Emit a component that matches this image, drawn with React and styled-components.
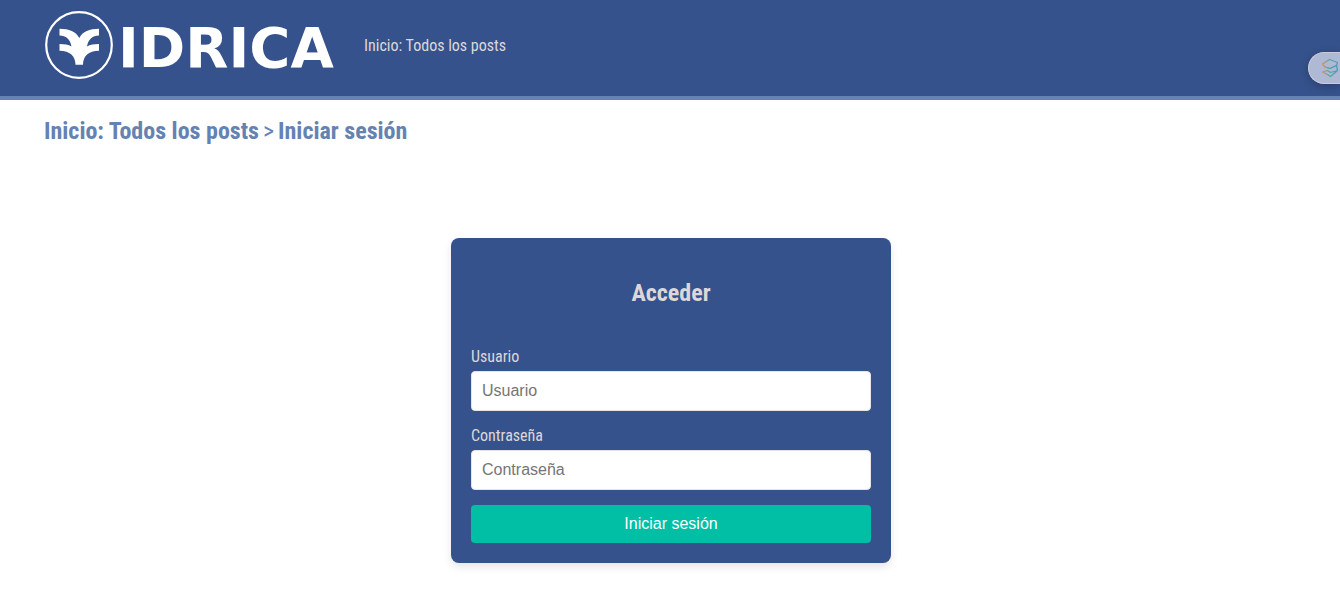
import React from "react";
import styled, { createGlobalStyle } from "styled-components";

const GlobalStyle = createGlobalStyle`
  *, *::before, *::after { box-sizing: border-box; }
  body {
    margin: 0;
    background: #fff;
    font-family: "Roboto Condensed", "Liberation Sans Narrow", Roboto, sans-serif;
    font-size: 16px;
    line-height: 19px;
  }
`;

const Header = styled.header`
  display: flex;
  align-items: center;
  gap: 20px;
  height: 100px;
  padding: 0 44px;
  background: #36528c;
  border-bottom: 4px solid #6482b2;
`;

const Brand = styled.a`
  display: flex;
  align-items: center;
  gap: 4px;
  width: 300px;
  height: 70px;
  margin-bottom: 6px;
  color: #fff;
  text-decoration: none;
`;

const Emblem = styled.svg`
  flex: none;
  width: 70px;
  height: 70px;
`;

const Wordmark = styled.span`
  padding-top: 6px;
  font: bold 56px/70px "DejaVu Sans", sans-serif;
`;

const NavLink = styled.a`
  margin-bottom: 5px;
  color: #ddd8d8;
  text-decoration: none;
`;

const Main = styled.main`
  padding: 16px 42px 26px 44px;
`;

const Breadcrumb = styled.nav`
  display: flex;
  align-items: center;
  gap: 4px;
  color: #6482b2;
  font-size: 24px;
  line-height: 31px;
`;

const Crumb = styled.a`
  color: inherit;
  font-weight: 700;
  text-decoration: none;
`;

const Card = styled.form`
  display: flex;
  flex-direction: column;
  width: 100%;
  max-width: 440px;
  margin: 91px auto 0;
  padding: 20px;
  border-radius: 8px;
  background: #36528c;
  box-shadow: 0 4px 8px rgba(0, 0, 0, 0.1);
  color: #ddd8d8;
`;

const Title = styled.h2`
  margin: 20px 0 38px;
  font-size: 24px;
  line-height: 31px;
  text-align: center;
`;

const Label = styled.label`
  margin-bottom: 5px;
`;

const Input = styled.input`
  height: 40px;
  margin-bottom: 15px;
  padding: 10px;
  border: 1px solid #e5e5e8;
  border-radius: 4px;
  background: #fff;
  color: #222;
  font: 16px "Liberation Sans", Arial, sans-serif;
  &::placeholder { color: #757575; }
`;

const Submit = styled.button`
  height: 38px;
  padding: 10px;
  border: 0;
  border-radius: 4px;
  background: #00bfa5;
  color: #fff;
  font: 16px/18px "Liberation Sans", Arial, sans-serif;
  cursor: pointer;
`;

const SideTab = styled.button`
  position: fixed;
  top: 52px;
  right: 0;
  display: flex;
  align-items: center;
  width: 32px;
  height: 32px;
  padding: 0 0 0 12px;
  border: 1px solid #c6cde0;
  border-right: 0;
  border-radius: 16px 0 0 16px;
  background: #afb9d3;
  box-shadow: 0 2px 8px rgba(0, 0, 0, 0.25);
`;

const TabIcon = styled.svg`
  flex: none;
  width: 18px;
  height: 20px;
`;

export default function App() {
  return (
    <>
      <GlobalStyle />
      <Header>
        <Brand href="#" aria-label="Idrica">
          <Emblem viewBox="0 0 70 70" aria-hidden="true">
            <circle cx="35" cy="35" r="32.8" fill="none" stroke="#fff" strokeWidth="2.2" />
            <path
              fill="#fff"
              d="M15.500 18.700C25 18.700 32 21.500 35.300 28C38.500 21.500 45.500 18.700 55 18.700V25.500C48.500 25.500 44.500 29 43 36.500C46 34.700 50 34 55 34V40.700C44.500 41 39 46 39 54.700H31.500C31.500 46 26 41 15.500 40.700V34C20.500 34 24.500 34.700 27.500 36.500C26 29 22 25.500 15.500 25.500Z"
            />
          </Emblem>
          <Wordmark>IDRICA</Wordmark>
        </Brand>
        <NavLink href="#">Inicio: Todos los posts</NavLink>
      </Header>
      <Main>
        <Breadcrumb aria-label="Ruta">
          <Crumb href="#">Inicio: Todos los posts</Crumb>
          <span>&gt;</span>
          <Crumb href="#">Iniciar sesión</Crumb>
        </Breadcrumb>
        <Card onSubmit={(event) => event.preventDefault()}>
          <Title>Acceder</Title>
          <Label htmlFor="user">Usuario</Label>
          <Input id="user" type="text" placeholder="Usuario" />
          <Label htmlFor="password">Contraseña</Label>
          <Input id="password" type="password" placeholder="Contraseña" />
          <Submit type="submit">Iniciar sesión</Submit>
        </Card>
      </Main>
      <SideTab type="button" aria-label="Abrir panel">
        <TabIcon viewBox="0 0 18 20" fill="none" strokeWidth="1.3" strokeLinejoin="round" aria-hidden="true">
          <defs>
            <linearGradient id="tabGradient" x1="1" y1="0" x2="17" y2="0" gradientUnits="userSpaceOnUse">
              <stop offset="0" stopColor="#e8875c" />
              <stop offset="0.45" stopColor="#55a89c" />
              <stop offset="1" stopColor="#4a9cc4" />
            </linearGradient>
          </defs>
          <g stroke="url(#tabGradient)">
            <path d="M1.500 6L8.500 1.500L16.500 4.500L15.500 7.500L9 10.500L4 9Z" />
            <path d="M4 9L9 10.500L15.500 7.500L16.500 12.500L9.500 18.500L6.500 16.500L1.500 14L6.500 12.500L9.500 14.500L16.500 12.500" />
          </g>
        </TabIcon>
      </SideTab>
    </>
  );
}
